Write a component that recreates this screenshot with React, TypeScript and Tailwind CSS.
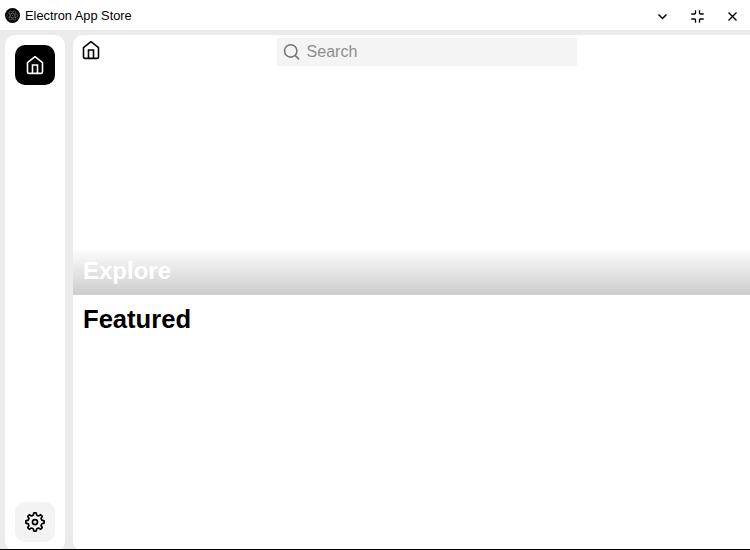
import React from "react";

const HomeIcon = () => (
  <svg width="20" height="20" viewBox="0 0 20 20" fill="none" stroke="currentColor" strokeWidth="1.6" strokeLinecap="round" strokeLinejoin="round">
    <path d="M2.5 7.6 10 1.7l7.5 5.9v9.3a1.5 1.5 0 0 1-1.5 1.5H4a1.5 1.5 0 0 1-1.5-1.5z" />
    <path d="M7.5 18V10h5v8" strokeLinejoin="miter" />
  </svg>
);

// Eight teeth: a narrow flat crest on each 45° step, a shallow valley between.
const gearOutline = Array.from({ length: 8 }, (_, i) => i * 45)
  .flatMap((a) => [
    [a - 7, 9.2],
    [a + 7, 9.2],
    [a + 15, 7],
    [a + 30, 7],
  ])
  .map(([deg, r]) => {
    const t = (deg * Math.PI) / 180;
    return `${(11 + r * Math.cos(t)).toFixed(2)},${(11 + r * Math.sin(t)).toFixed(2)}`;
  })
  .join(" ");

const GearIcon = () => (
  <svg width="22" height="22" viewBox="0 0 22 22" fill="none" stroke="currentColor" strokeWidth="1.75" strokeLinejoin="round">
    <polygon points={gearOutline} />
    <circle cx="11" cy="11" r="2.5" />
  </svg>
);

const ElectronLogo = () => (
  <svg width="15" height="15" viewBox="0 0 30 30" fill="none" stroke="#6b6b6b" strokeWidth="1.3">
    <circle cx="15" cy="15" r="15" fill="#000" stroke="none" />
    <ellipse cx="15" cy="15" rx="10.5" ry="4.2" />
    <ellipse cx="15" cy="15" rx="10.5" ry="4.2" transform="rotate(60 15 15)" />
    <ellipse cx="15" cy="15" rx="10.5" ry="4.2" transform="rotate(120 15 15)" />
    <circle cx="15" cy="15" r="1.2" fill="#6b6b6b" stroke="none" />
  </svg>
);

const WindowButton = ({ label, children }: { label: string; children: React.ReactNode }) => (
  <button aria-label={label} className="flex h-8 w-[35px] items-center justify-center">
    <svg width="15" height="15" viewBox="0 0 15 15" fill="none" stroke="currentColor" strokeWidth="1.5">
      {children}
    </svg>
  </button>
);

export default function App() {
  return (
    <div className="flex h-[550px] w-[750px] flex-col overflow-hidden border-b border-black bg-[#ebebeb] font-['Liberation_Sans',Arial,sans-serif] text-black">
      <header className="flex h-[30px] shrink-0 items-center bg-white pl-[5px]">
        <ElectronLogo />
        <h1 className="ml-[5px] text-[12.8px] leading-[15px]">Electron App Store</h1>
        <div className="mt-[3px] ml-auto flex">
          <WindowButton label="Minimize">
            <path d="m3.5 5.5 4 4 4-4" />
          </WindowButton>
          <WindowButton label="Restore">
            <path strokeWidth="1.3" d="M5.5 1.3V4a1 1 0 0 1-1 1H1.3M9.5 1.3V4a1 1 0 0 0 1 1h3.2M5.5 13.7V11a1 1 0 0 0-1-1H1.3M9.5 13.7V11a1 1 0 0 1 1-1h3.2" />
          </WindowButton>
          <WindowButton label="Close">
            <path d="m3.5 3.5 8 8M11.5 3.5l-8 8" strokeWidth="1.4" />
          </WindowButton>
        </div>
      </header>

      <div className="-mb-0.5 flex min-h-0 grow gap-2 pt-[5px] pl-[5px]">
        <nav className="flex w-[60px] shrink-0 flex-col items-center justify-between rounded-[10px] bg-white pt-2.5 pb-[9px]">
          <button aria-label="Home" className="flex size-10 items-center justify-center rounded-[10px] bg-black text-white">
            <HomeIcon />
          </button>
          <button aria-label="Settings" className="flex size-10 items-center justify-center rounded-[10px] bg-[#f3f3f3]">
            <GearIcon />
          </button>
        </nav>

        <main className="min-w-0 grow overflow-hidden rounded-l-[10px] bg-white">
          <section className="flex h-[260px] flex-col justify-between">
            <div className="flex pt-[3px] pl-2">
              <button aria-label="Home" className="mt-0.5 size-5">
                <HomeIcon />
              </button>
              <label className="ml-44 flex h-7 w-[300px] items-center bg-[#f4f4f4] pl-1.5">
                <svg width="18" height="18" viewBox="0 0 18 18" fill="none" stroke="#777" strokeWidth="1.6" strokeLinecap="round">
                  <circle cx="7.7" cy="7.9" r="6.2" />
                  <path d="m12.3 12.6 3.3 3.3" />
                </svg>
                <input placeholder="Search" className="ml-[5.6px] w-60 bg-transparent text-base leading-5 outline-none placeholder:text-[#8e8e8e]" />
              </label>
            </div>
            <div className="h-12 bg-gradient-to-b from-transparent to-black/20 pt-2.5 pl-2.5">
              <h2 className="text-2xl leading-7 font-bold text-white">Explore</h2>
            </div>
          </section>
          <h2 className="pt-[9px] pl-2.5 text-[25.6px] leading-[30px] font-bold">Featured</h2>
        </main>
      </div>
    </div>
  );
}
